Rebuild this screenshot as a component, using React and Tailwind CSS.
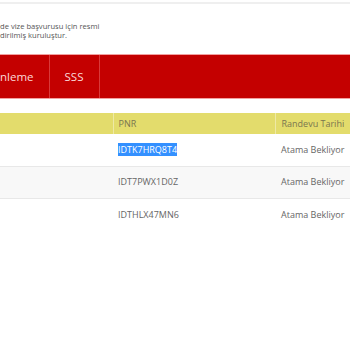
import React from "react";

const rows = [
  { pnr: "IDTK7HRQ8T4", date: "Atama Bekliyor", selected: true },
  { pnr: "IDT7PWX1D0Z", date: "Atama Bekliyor" },
  { pnr: "IDTHLX47MN6", date: "Atama Bekliyor" },
];

function App() {
  return (
    <div
      className="w-[350px] h-[350px] overflow-hidden bg-white"
      style={{ fontFamily: '"Open Sans", "DejaVu Sans", sans-serif' }}
    >
      <div className="h-[2px] mt-[2px] bg-[#efefef]" />

      <div className="pt-[18px] text-[7.6px] leading-[9px] text-[#555]">
        <p>de vize başvurusu için resmi</p>
        <p>dirilmiş kuruluştur.</p>
      </div>

      <nav className="mt-[14px] flex h-[45px] border-y border-[#f2a0a0] bg-[#c40000] text-[11.5px] text-[#fbdada]">
        <div className="flex items-center pr-[15px] border-r border-[#d93a3a]">
          <span>nleme</span>
        </div>
        <div className="flex items-center w-[50px] justify-center border-r border-[#d93a3a]">
          <span>SSS</span>
        </div>
      </nav>

      <table className="mt-[14px] border-collapse text-[9px] text-[#666] w-[400px] table-fixed">
        <thead>
          <tr className="bg-[#e3dc6c] h-[21px] text-[#7a7650]">
            <th className="w-[113px] border-r border-[#eee9a6] font-normal text-left" />
            <th className="w-[162px] border-r border-[#eee9a6] font-normal text-left pl-[5px]">PNR</th>
            <th className="font-normal text-left pl-[6px]">Randevu Tarihi</th>
          </tr>
        </thead>
        <tbody>
          {rows.map((r, i) => (
            <tr
              key={r.pnr}
              className={`h-[32px] ${i < rows.length - 1 ? "border-b border-[#e8e8e8]" : ""} ${i % 2 === 1 ? "bg-[#f8f8f8]" : "bg-white"}`}
            >
              <td />
              <td className="pl-[5px]">
                {r.selected ? (
                  <span className="bg-[#3390ff] text-white">{r.pnr}</span>
                ) : (
                  r.pnr
                )}
              </td>
              <td className="pl-[6px]">{r.date}</td>
            </tr>
          ))}
        </tbody>
      </table>
    </div>
  );
}

export default App;
